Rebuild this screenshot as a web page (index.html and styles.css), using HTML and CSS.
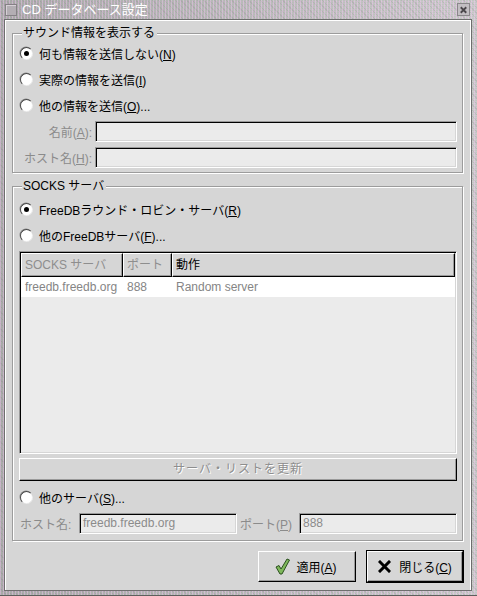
FILE: index.html
```html
<!DOCTYPE html>
<html lang="ja">
<head>
<meta charset="utf-8">
<title>CD データベース設定</title>
<link rel="stylesheet" href="styles.css">
</head>
<body>
<div class="window">
  <div class="titlebar">
    <span class="menu-btn"></span>
    <span class="title">CD データベース設定</span>
    <span class="close-btn">
      <svg width="12" height="12" viewBox="0 0 12 12"><path d="M3 3 L9 9 M9 3 L3 9" stroke="#4a464a" stroke-width="2"/></svg>
    </span>
  </div>
  <div class="client">
    <div class="frame f1">
      <div class="legend">サウンド情報を表示する</div>
      <div class="radio-row"><span class="radio on"></span><span>何も情報を送信しない(<u>N</u>)</span></div>
      <div class="radio-row"><span class="radio"></span><span>実際の情報を送信(<u>I</u>)</span></div>
      <div class="radio-row"><span class="radio"></span><span>他の情報を送信(<u>O</u>)...</span></div>
      <div class="field-row first">
        <span class="flabel">名前(<u>A</u>):</span>
        <div class="entry wide"></div>
      </div>
      <div class="field-row second">
        <span class="flabel">ホスト名(<u>H</u>):</span>
        <div class="entry wide"></div>
      </div>
    </div>

    <div class="frame f2">
      <div class="legend">SOCKS サーバ</div>
      <div class="radio-row"><span class="radio on"></span><span>FreeDBラウンド・ロビン・サーバ(<u>R</u>)</span></div>
      <div class="radio-row"><span class="radio"></span><span>他のFreeDBサーバ(<u>F</u>)...</span></div>
      <div class="table">
        <div class="thead">
          <div class="th c1 dim">SOCKS サーバ</div>
          <div class="th c2 dim">ポート</div>
          <div class="th c3">動作</div>
        </div>
        <div class="tr">
          <div class="td c1">freedb.freedb.org</div>
          <div class="td c2">888</div>
          <div class="td c3">Random server</div>
        </div>
      </div>
      <div class="wide-btn">サーバ・リストを更新</div>
      <div class="radio-row r3"><span class="radio"></span><span>他のサーバ(<u>S</u>)...</span></div>
      <div class="server-row">
        <span class="slabel l1">ホスト名:</span>
        <div class="entry half">freedb.freedb.org</div>
        <span class="slabel l2">ポート(<u>P</u>)</span>
        <div class="entry half">888</div>
      </div>
    </div>

    <div class="actions">
      <div class="btn apply">
        <svg width="15" height="17" viewBox="0 0 15 17"><path d="M1 9 L4 7.5 L6 11 L12 1 L14.5 2 L7 16 L5 16 Z" fill="#7fb85c" stroke="#2a4f1e" stroke-width="1" stroke-linejoin="round"/></svg>
        <span>適用(<u>A</u>)</span>
      </div>
      <div class="focus-ring">
        <div class="btn close">
          <svg width="13" height="13" viewBox="0 0 13 13"><path d="M2 2 L11 11 M11 2 L2 11" stroke="#000" stroke-width="3" stroke-linecap="square"/></svg>
          <span>閉じる(<u>C</u>)</span>
        </div>
      </div>
    </div>
  </div>
</div>
</body>
</html>
```

FILE: styles.css
```css
* { box-sizing: border-box; }
html, body { margin: 0; padding: 0; }
body {
  font-family: "Liberation Sans", "Noto Sans CJK JP", sans-serif;
  font-size: 12px;
  color: #000;
  background: #d6d6d6;
}
u { text-decoration: underline; text-underline-offset: 1px; }

.window {
  width: 477px;
  height: 596px;
  padding: 0 5px 5px 4px;
  background-color: #b8b3b8;
  background-image:
    repeating-linear-gradient(90deg, rgba(255, 205, 255, 0.35) 0 1px, transparent 1px 3px),
    repeating-linear-gradient(0deg, rgba(160, 200, 160, 0.25) 0 1px, transparent 1px 2px),
    repeating-linear-gradient(45deg, rgba(120, 110, 120, 0.18) 0 1px, transparent 1px 4px),
    linear-gradient(90deg, #aaa5aa, #cec8ce);
  border-bottom: 1px solid #5e5e5e;
  display: flex;
  flex-direction: column;
}

.titlebar {
  height: 19px;
  display: flex;
  align-items: center;
  padding-left: 1px;
  flex: none;
}
.menu-btn {
  width: 12px;
  height: 12px;
  border: 1px solid #858085;
  background: #b3aeb3;
  box-shadow: inset 1px 1px 0 #d6d0d6;
  margin-right: 5px;
}
.title {
  color: #fff;
  font-size: 13px;
  line-height: 15px;
}
.close-btn {
  margin-left: auto;
  margin-right: 2px;
  width: 13px;
  height: 13px;
  border: 1px solid #8a868a;
  background: #c2bec2;
  display: flex;
  align-items: center;
  justify-content: center;
}
.close-btn svg { display: block; }

.client {
  width: 468px;
  height: 572px;
  background: #d6d6d6;
  border: 1px solid #6e6e6e;
  box-shadow: inset 1px 1px 0 #fff, inset -1px 0 0 #fff;
  padding: 13px 8px 0 7px;
  flex: none;
}

.frame {
  border: 1px solid #9c9c9c;
  box-shadow: 1px 1px 0 #fff, inset 1px 1px 0 #fff;
  padding: 0 5px 4px 6px;
}
.f2 { margin-top: 13px; padding-bottom: 6px; }

.legend {
  width: fit-content;
  height: 15px;
  line-height: 15px;
  margin: -8px 0 -1px 3px;
  padding: 0 2px 0 1px;
  background: #d6d6d6;
  white-space: nowrap;
}
.f2 .legend { margin-bottom: 2px; }

.radio-row {
  height: 26px;
  display: flex;
  align-items: center;
  gap: 6px;
  margin-left: 1px;
  white-space: nowrap;
}
.radio-row.r3 { height: 25px; margin-top: 4px; }

.radio {
  width: 13px;
  height: 13px;
  border-radius: 50%;
  border: 1px solid;
  border-color: #4a4a4a #ececec #ececec #4a4a4a;
  background: #fff;
  box-shadow: -0.5px -0.5px 0 #8a8a8a;
  display: flex;
  align-items: center;
  justify-content: center;
  flex: none;
}
.radio.on::after {
  content: "";
  width: 5px;
  height: 5px;
  border-radius: 50%;
  background: #000;
}

.field-row {
  display: flex;
  align-items: center;
  gap: 3px;
}
.field-row.first { margin-top: 3px; }
.field-row.second { margin-top: 5px; }
.flabel {
  width: 73px;
  text-align: right;
  color: #8b8b8b;
  white-space: nowrap;
}

.entry {
  height: 21px;
  background: #ebebeb;
  border: 1px solid;
  border-color: #9a9a9a #fff #fff #9a9a9a;
  box-shadow: inset 1px 1px 0 #000, inset -1px -1px 0 #d6d6d6;
  color: #8b8b8b;
  line-height: 19px;
  padding-left: 3px;
  white-space: nowrap;
}
.entry.wide { width: 362px; }
.entry.half { width: 158px; }

.table {
  margin-top: 3px;
  height: 203px;
  background: #ebebeb;
  border: 1px solid;
  border-color: #9a9a9a #fff #fff #9a9a9a;
  box-shadow: inset 1px 1px 0 #000, inset -1px -1px 0 #d6d6d6;
  padding: 1px;
}
.thead, .tr { display: flex; }
.th {
  height: 24px;
  line-height: 22px;
  border: 1px solid;
  border-color: #fff #000 #000 #fff;
  box-shadow: inset -1px -1px 0 #9a9a9a;
  background: #d6d6d6;
  padding-left: 3px;
  white-space: nowrap;
}
.th.dim { color: #8e8e8e; }
.c1 { width: 102px; }
.c2 { width: 49px; }
.c3 { width: 283px; }
.tr { background: #fff; height: 20px; }
.td {
  line-height: 20px;
  color: #858585;
  padding-left: 4px;
  white-space: nowrap;
}

.wide-btn {
  margin-top: 4px;
  height: 23px;
  border: 1px solid;
  border-color: #fff #000 #000 #fff;
  box-shadow: inset -1px -1px 0 #9a9a9a;
  text-align: center;
  line-height: 20px;
  color: #8e8e8e;
  text-shadow: 1px 1px 0 #fff;
  letter-spacing: 1px;
}

.server-row {
  display: flex;
  align-items: center;
  margin-top: 3px;
}
.slabel { color: #8b8b8b; white-space: nowrap; }
.slabel.l1 { width: 60px; padding-left: 1px; }
.slabel.l2 { width: 62px; padding-left: 3px; }

.actions {
  margin-top: 9px;
  display: flex;
  justify-content: flex-end;
  align-items: center;
  gap: 10px;
  margin-right: -1px;
}
.btn {
  height: 31px;
  width: 98px;
  border: 1px solid;
  border-color: #fff #000 #000 #fff;
  box-shadow: inset -1px -1px 0 #9a9a9a;
  background: #d6d6d6;
  display: flex;
  align-items: center;
  justify-content: center;
  white-space: nowrap;
}
.btn.apply { gap: 6px; }
.btn.apply svg { margin-left: -2px; }
.btn.close { gap: 8px; width: 96px; }
.btn svg { display: block; flex: none; }
.focus-ring {
  border: 1px solid #000;
  width: 98px;
  height: 33px;
}
```
